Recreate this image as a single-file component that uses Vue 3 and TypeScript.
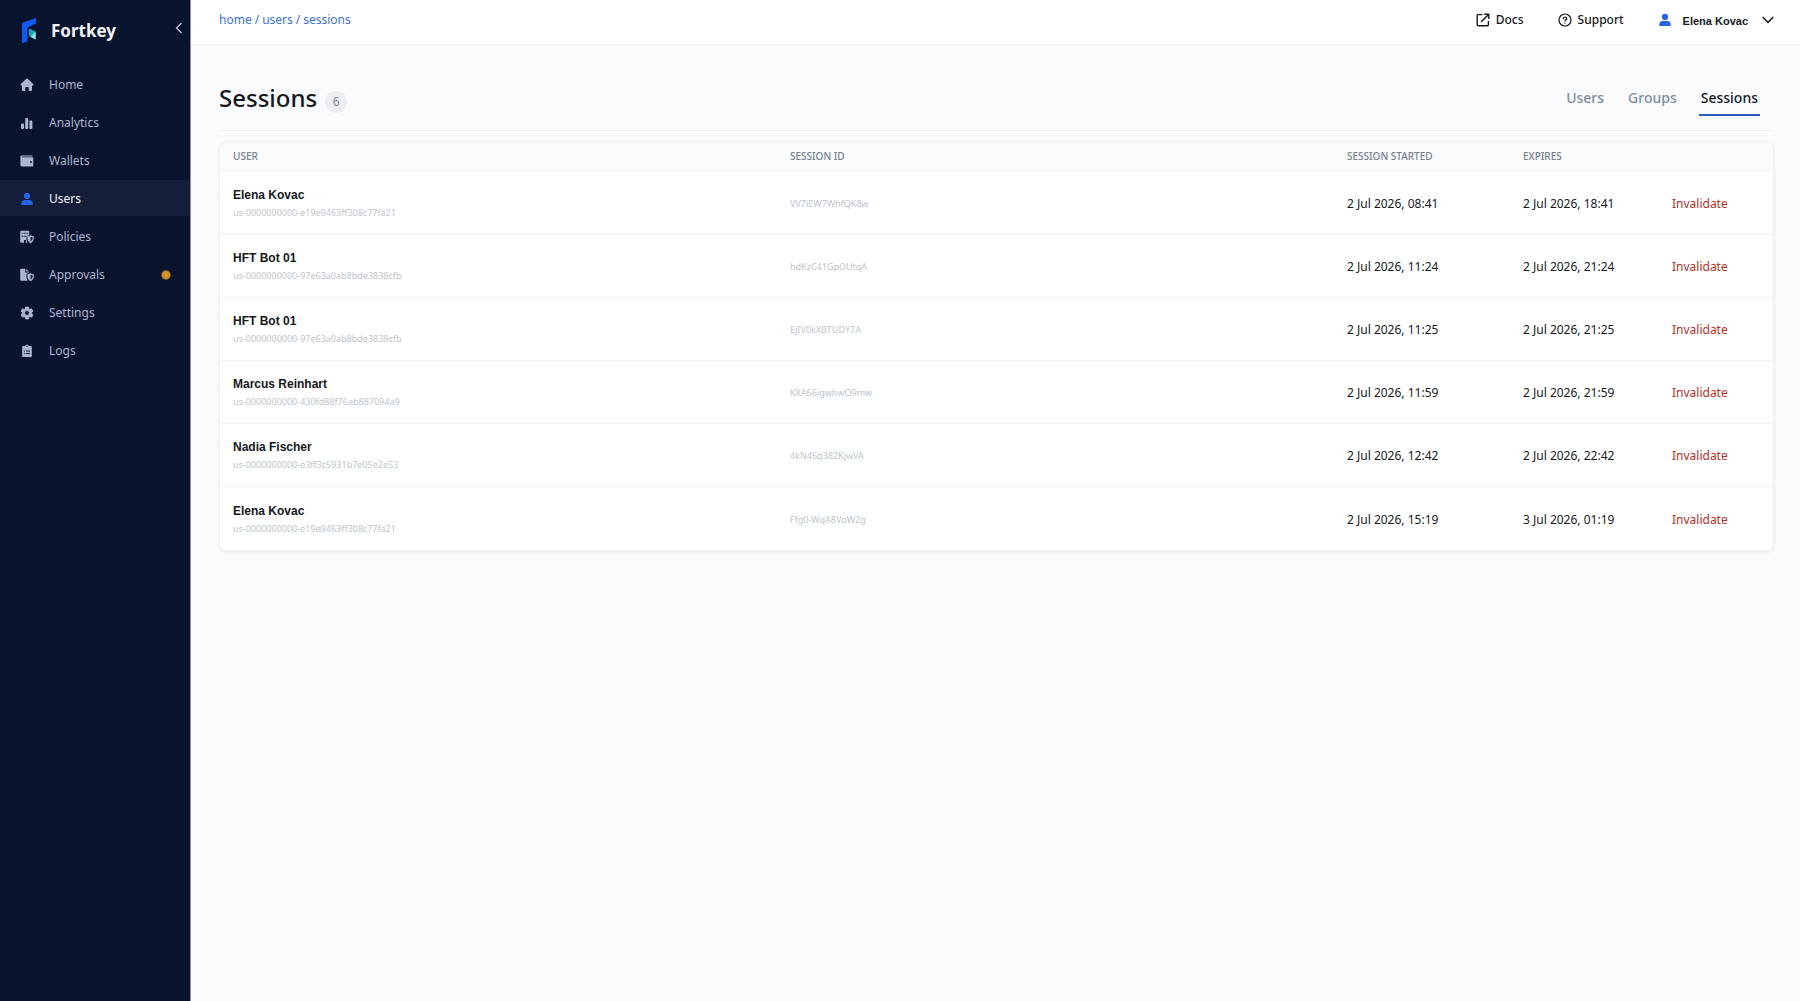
<script setup lang="ts">
interface NavItem {
  label: string
  icon: string
  active?: boolean
  alert?: boolean
}

interface Session {
  user: string
  userId: string
  sessionId: string
  started: string
  expires: string
}

const navItems: NavItem[] = [
  { label: 'Home', icon: 'home' },
  { label: 'Analytics', icon: 'analytics' },
  { label: 'Wallets', icon: 'wallets' },
  { label: 'Users', icon: 'users', active: true },
  { label: 'Policies', icon: 'policies' },
  { label: 'Approvals', icon: 'approvals', alert: true },
  { label: 'Settings', icon: 'settings' },
  { label: 'Logs', icon: 'logs' },
]

const crumbs: string[] = ['home', 'users', 'sessions']

const tabs: string[] = ['Users', 'Groups', 'Sessions']
const activeTab = 'Sessions'

const sessions: Session[] = [
  { user: 'Elena Kovac', userId: 'us-0000000000-e19e9463ff308c77fa21', sessionId: 'VV7iEW7WhfQK8w', started: '2 Jul 2026, 08:41', expires: '2 Jul 2026, 18:41' },
  { user: 'HFT Bot 01', userId: 'us-0000000000-97e63a0ab8bde3838cfb', sessionId: 'hdKzC41GpOUtqA', started: '2 Jul 2026, 11:24', expires: '2 Jul 2026, 21:24' },
  { user: 'HFT Bot 01', userId: 'us-0000000000-97e63a0ab8bde3838cfb', sessionId: 'EjIV0kXBTUDY7A', started: '2 Jul 2026, 11:25', expires: '2 Jul 2026, 21:25' },
  { user: 'Marcus Reinhart', userId: 'us-0000000000-430fd88f76ab887094a9', sessionId: 'KXA66igwhwO9mw', started: '2 Jul 2026, 11:59', expires: '2 Jul 2026, 21:59' },
  { user: 'Nadia Fischer', userId: 'us-0000000000-e3ff3c5931b7e05e2e53', sessionId: '4kN46q382KjwVA', started: '2 Jul 2026, 12:42', expires: '2 Jul 2026, 22:42' },
  { user: 'Elena Kovac', userId: 'us-0000000000-e19e9463ff308c77fa21', sessionId: 'Ffg0-WqA8VoW2g', started: '2 Jul 2026, 15:19', expires: '3 Jul 2026, 01:19' },
]
</script>

<template>
  <div class="app">
    <aside class="sidebar">
      <div class="brand">
        <svg class="brand-mark" viewBox="0 0 14 26" aria-hidden="true">
          <path d="M0 6.2 Q0 5 1.2 4.5 L14 0 V5.6 L5.6 9.4 V23.2 L0 25.6 Z" fill="#1257f0" />
          <path d="M7 10.6 L13.6 13.4 V21.4 L7 18 Z" fill="#17a9b4" />
          <path d="M13.6 13.4 V21.4 L8.6 18.8 Z" fill="#8be6ea" />
        </svg>
        <span class="brand-name">Fortkey</span>
        <button class="collapse" type="button" aria-label="Collapse sidebar">
          <svg viewBox="0 0 8 12" aria-hidden="true"><path d="M6.5 1 L1.5 6 L6.5 11" fill="none" stroke="currentColor" stroke-width="1.3" /></svg>
        </button>
      </div>

      <nav class="nav" aria-label="Main">
        <a v-for="item in navItems" :key="item.label" href="#" class="nav-item" :class="{ active: item.active }">
          <svg class="nav-icon" viewBox="0 0 14 14" fill="currentColor" aria-hidden="true">
            <path v-if="item.icon === 'home'" d="M6.4 .8Q7 .3 7.6 .8L13.5 6.3Q14 7.2 13.1 7.4H12V12.3Q12 13 11.3 13H8.7V9.9Q8.7 9.1 7.9 9.1H6.1Q5.3 9.1 5.3 9.9V13H2.7Q2 13 2 12.3V7.4H.9Q0 7.2 .5 6.3Z" />
            <template v-else-if="item.icon === 'analytics'">
              <rect x="1" y="7.5" width="3" height="5.5" rx="1" />
              <rect x="5.2" y="2" width="3" height="11" rx="1" />
              <rect x="9.4" y="4.5" width="3" height="8.5" rx="1" />
            </template>
            <path v-else-if="item.icon === 'wallets'" fill-rule="evenodd" d="M1.8 1.4H11.8Q12.6 1.4 12.6 2.4H2.2V3.2H12.2Q13.3 3.2 13.3 4.4V11.4Q13.3 12.6 12.1 12.6H1.8Q.4 12.6 .4 11.2V2.8Q.4 1.4 1.8 1.4ZM11 7A1 1 0 1 0 11 9 1 1 0 1 0 11 7Z" />
            <template v-else-if="item.icon === 'users'">
              <circle cx="7" cy="3.9" r="3.1" />
              <path d="M1.3 13V11.4Q1.5 8 5 8H9Q12.5 8 12.7 11.4V13Z" />
            </template>
            <template v-else-if="item.icon === 'policies'">
              <path fill-rule="evenodd" d="M1 .8H8.4Q9.2 .8 9.2 1.6V5L6.5 6.3V9.5L7.4 12.8H5.9V10H4V12.8H1Q.2 12.8 .2 12V1.6Q.2 .8 1 .8ZM1.9 2.7V4H3.2V2.7ZM4.3 2.7V4H5.6V2.7ZM6.7 2.7V4H8V2.7ZM1.9 5.8V7.1H3.2V5.8ZM4.3 5.8V7.1H5.6V5.8Z" />
              <path fill-rule="evenodd" d="M10.6 5.2 13.9 6.5Q14.2 11.4 10.6 13.2 7 11.4 7.3 6.5ZM10.6 6.7V11.6Q12.9 10.2 12.7 7.5Z" />
            </template>
            <template v-else-if="item.icon === 'approvals'">
              <path d="M1 .8H5.3V4.4H9.2V4.8L6.4 6V9.2L7.6 12.8H1Q.2 12.8 .2 12V1.6Q.2 .8 1 .8ZM6.2 .9 9.1 3.6H6.2Z" />
              <path fill-rule="evenodd" d="M10.6 5.2 13.9 6.5Q14.2 11.4 10.6 13.2 7 11.4 7.3 6.5ZM10.6 6.7V11.6Q12.9 10.2 12.7 7.5Z" />
            </template>
            <path v-else-if="item.icon === 'settings'" fill-rule="evenodd" stroke="currentColor" stroke-width=".8" stroke-linejoin="round" d="M5.6 1H8.4L8.8 2.8 9.8 3.4 11.6 2.8 13 5.2 11.6 6.4V7.6L13 8.8 11.6 11.2 9.8 10.6 8.8 11.2 8.4 13H5.6L5.2 11.2 4.2 10.6 2.4 11.2 1 8.8 2.4 7.6V6.4L1 5.2 2.4 2.8 4.2 3.4 5.2 2.8ZM7 4.6A2.4 2.4 0 1 0 7 9.4 2.4 2.4 0 1 0 7 4.6Z" />
            <path v-else fill-rule="evenodd" d="M5 1.9Q5.6 .4 7 .4T9 1.9H10.6Q11.8 1.9 11.8 3.1V11.9Q11.8 13.1 10.6 13.1H3.4Q2.2 13.1 2.2 11.9V3.1Q2.2 1.9 3.4 1.9ZM7 1.5A.7 .7 0 1 0 7 2.9 .7 .7 0 1 0 7 1.5ZM4 6.5V7.5H5V6.5ZM6 6.5V7.5H10V6.5ZM4 9V10H5V9ZM6 9V10H10V9Z" />
          </svg>
          <span>{{ item.label }}</span>
          <i v-if="item.alert" class="dot" />
        </a>
      </nav>
    </aside>

    <div class="main">
      <header class="topbar">
        <nav class="crumbs" aria-label="Breadcrumb">
          <template v-for="(crumb, i) in crumbs" :key="crumb">
            <span v-if="i > 0">/</span>
            <a href="#">{{ crumb }}</a>
          </template>
        </nav>
        <div class="top-actions">
          <a href="#" class="top-link">
            <svg viewBox="0 0 14 14" fill="none" stroke="currentColor" stroke-width="1.4" stroke-linecap="round" stroke-linejoin="round" aria-hidden="true">
              <path d="M6 1.6H2.2Q1.2 1.6 1.2 2.6V11.8Q1.2 12.8 2.2 12.8H11.4Q12.4 12.8 12.4 11.8V8.4M8.6 1.2H12.8V5.4M12.6 1.4 5.4 8.6" />
            </svg>
            Docs
          </a>
          <a href="#" class="top-link">
            <svg viewBox="0 0 14 14" fill="none" stroke="currentColor" stroke-width="1.2" stroke-linecap="round" aria-hidden="true">
              <circle cx="7" cy="7" r="6" />
              <path d="M5.2 5.6Q5.3 4 7 4T8.8 5.5Q8.8 6.5 7.8 6.9 7 7.3 7 8.1M7 10V10.2" />
            </svg>
            Support
          </a>
          <button class="account" type="button">
            <svg class="avatar" viewBox="0 0 14 14" fill="currentColor" aria-hidden="true">
              <circle cx="7" cy="3.9" r="3.1" />
              <path d="M1.3 13V11.4Q1.5 8 5 8H9Q12.5 8 12.7 11.4V13Z" />
            </svg>
            <span class="account-name">Elena Kovac</span>
            <svg class="chevron" viewBox="0 0 12 8" fill="none" stroke="currentColor" stroke-width="1.5" stroke-linecap="round" stroke-linejoin="round" aria-hidden="true">
              <path d="M1.2 1.4 6 6.4 10.8 1.4" />
            </svg>
          </button>
        </div>
      </header>

      <main class="content">
        <div class="page-head">
          <h1>Sessions</h1>
          <span class="count">{{ sessions.length }}</span>
          <nav class="tabs" aria-label="Sections">
            <a v-for="tab in tabs" :key="tab" href="#" class="tab" :class="{ active: tab === activeTab }">{{ tab }}</a>
          </nav>
        </div>

        <div class="card">
          <table>
            <colgroup>
              <col />
              <col />
              <col class="col-started" />
              <col class="col-expires" />
              <col class="col-action" />
            </colgroup>
            <thead>
              <tr>
                <th scope="col">USER</th>
                <th scope="col">SESSION ID</th>
                <th scope="col">SESSION STARTED</th>
                <th scope="col">EXPIRES</th>
                <th aria-label="Actions"></th>
              </tr>
            </thead>
            <tbody>
              <tr v-for="session in sessions" :key="session.sessionId">
                <td>
                  <div class="user-name">{{ session.user }}</div>
                  <div class="muted-id">{{ session.userId }}</div>
                </td>
                <td class="muted-id">{{ session.sessionId }}</td>
                <td>{{ session.started }}</td>
                <td>{{ session.expires }}</td>
                <td><button class="invalidate" type="button">Invalidate</button></td>
              </tr>
            </tbody>
          </table>
        </div>
      </main>
    </div>
  </div>
</template>

<style>
body {
  margin: 0;
  background: #fafbfd;
}
</style>

<style scoped>
* {
  box-sizing: border-box;
}

.app {
  display: flex;
  min-height: 100vh;
  font-family: "Noto Sans", "Open Sans", sans-serif;
  font-size: 12px;
  line-height: 16px;
  color: #15181c;
}

a {
  color: inherit;
  text-decoration: none;
}

button {
  border: 0;
  padding: 0;
  background: none;
  font: inherit;
  color: inherit;
  cursor: pointer;
}

svg {
  display: block;
  flex: none;
}

.sidebar {
  flex: none;
  width: 191px;
  background: #0a142e;
  border-right: 1px solid #8f91a8;
}

.brand {
  display: flex;
  align-items: center;
  height: 66px;
  padding: 0 7px 4px 22px;
}

.brand-mark {
  width: 14px;
  height: 26px;
}

.brand-name {
  margin-left: 15px;
  font-size: 17px;
  line-height: 24px;
  font-weight: 700;
  color: #f1f3fb;
}

.collapse {
  margin: 0 0 6px auto;
  color: #c3c9de;
}

.collapse svg {
  width: 8px;
  height: 12px;
}

.nav {
  display: flex;
  flex-direction: column;
  gap: 2px;
}

.nav-item {
  display: flex;
  align-items: center;
  height: 36px;
  padding: 1px 20px 0 20px;
  color: #adb6d0;
}

.nav-item.active {
  background: #141d3a;
  color: #f4f6fc;
}

.nav-icon {
  width: 14px;
  height: 14px;
  margin-right: 15px;
}

.nav-item.active .nav-icon {
  color: #2463e4;
}

.dot {
  width: 8px;
  height: 8px;
  margin-left: auto;
  border-radius: 50%;
  background: #cf9226;
  box-shadow: 0 0 0 1px #65502f;
}

.main {
  flex: 1;
  min-width: 0;
}

.topbar {
  display: flex;
  align-items: center;
  justify-content: space-between;
  height: 45px;
  padding: 0 26px 4px 28px;
  background: #fff;
  border-bottom: 1px solid #eff1f3;
}

.crumbs {
  display: flex;
  gap: 3px;
  color: #3c72d6;
}

.top-actions {
  display: flex;
  align-items: center;
  gap: 34px;
}

.top-link {
  display: flex;
  align-items: center;
  gap: 6px;
  font-weight: 500;
}

.top-link svg {
  width: 14px;
  height: 14px;
}

.account {
  display: flex;
  align-items: center;
}

.avatar {
  width: 14px;
  height: 14px;
  color: #2463e4;
}

.account-name {
  margin: 2px 14px 0 11px;
  font-family: "Liberation Sans", Arial, sans-serif;
  font-size: 11px;
  font-weight: 700;
}

.chevron {
  width: 12px;
  height: 8px;
}

.content {
  padding: 0 27px 0 28px;
}

.page-head {
  display: flex;
  align-items: center;
  height: 86px;
  margin-bottom: 12px;
  padding-top: 28px;
  border-bottom: 1px solid #eef0f3;
}

h1 {
  margin: 0 0 8px;
  font-size: 24px;
  line-height: 32px;
  font-weight: 500;
}

.count {
  min-width: 22px;
  margin-left: 8px;
  border-radius: 11px;
  background: #eceef4;
  color: #808697;
  line-height: 22px;
  text-align: center;
}

.tabs {
  display: flex;
  gap: 20px;
  margin: 0 13px 0 auto;
}

.tab {
  padding: 0 2px 6px;
  border-bottom: 2px solid transparent;
  font-size: 14px;
  line-height: 20px;
  font-weight: 500;
  color: #808da0;
}

.tab.active {
  border-color: #2a5cc0;
  color: #15181c;
}

.card {
  margin-left: 1px;
  overflow: hidden;
  border-radius: 6px;
  background: #fff;
  box-shadow: 0 0 0 1px #eff1f4, 0 1px 3px 1px #e4e7ea;
}

table {
  width: 100%;
  table-layout: fixed;
  border-collapse: separate;
  border-spacing: 0;
}

.col-started {
  width: 176px;
}

.col-expires {
  width: 149px;
}

.col-action {
  width: 114px;
}

th {
  height: 28px;
  padding: 0 13px 2px;
  background: #fafbfd;
  border-bottom: 1px solid #eff1f4;
  font-size: 10px;
  font-weight: 500;
  color: #74808c;
  text-align: left;
}

td {
  height: 63px;
  padding: 2px 13px 0;
  border-bottom: 1px solid #eff1f4;
}

tr:first-child td {
  height: 64px;
}

tr:last-child td {
  border-bottom: 0;
}

.user-name {
  margin-bottom: 2px;
  font-family: "Liberation Sans", Arial, sans-serif;
  font-weight: 700;
}

.muted-id {
  font-size: 9px;
  color: #bec5ce;
}

.invalidate {
  color: #b8301f;
}
</style>
